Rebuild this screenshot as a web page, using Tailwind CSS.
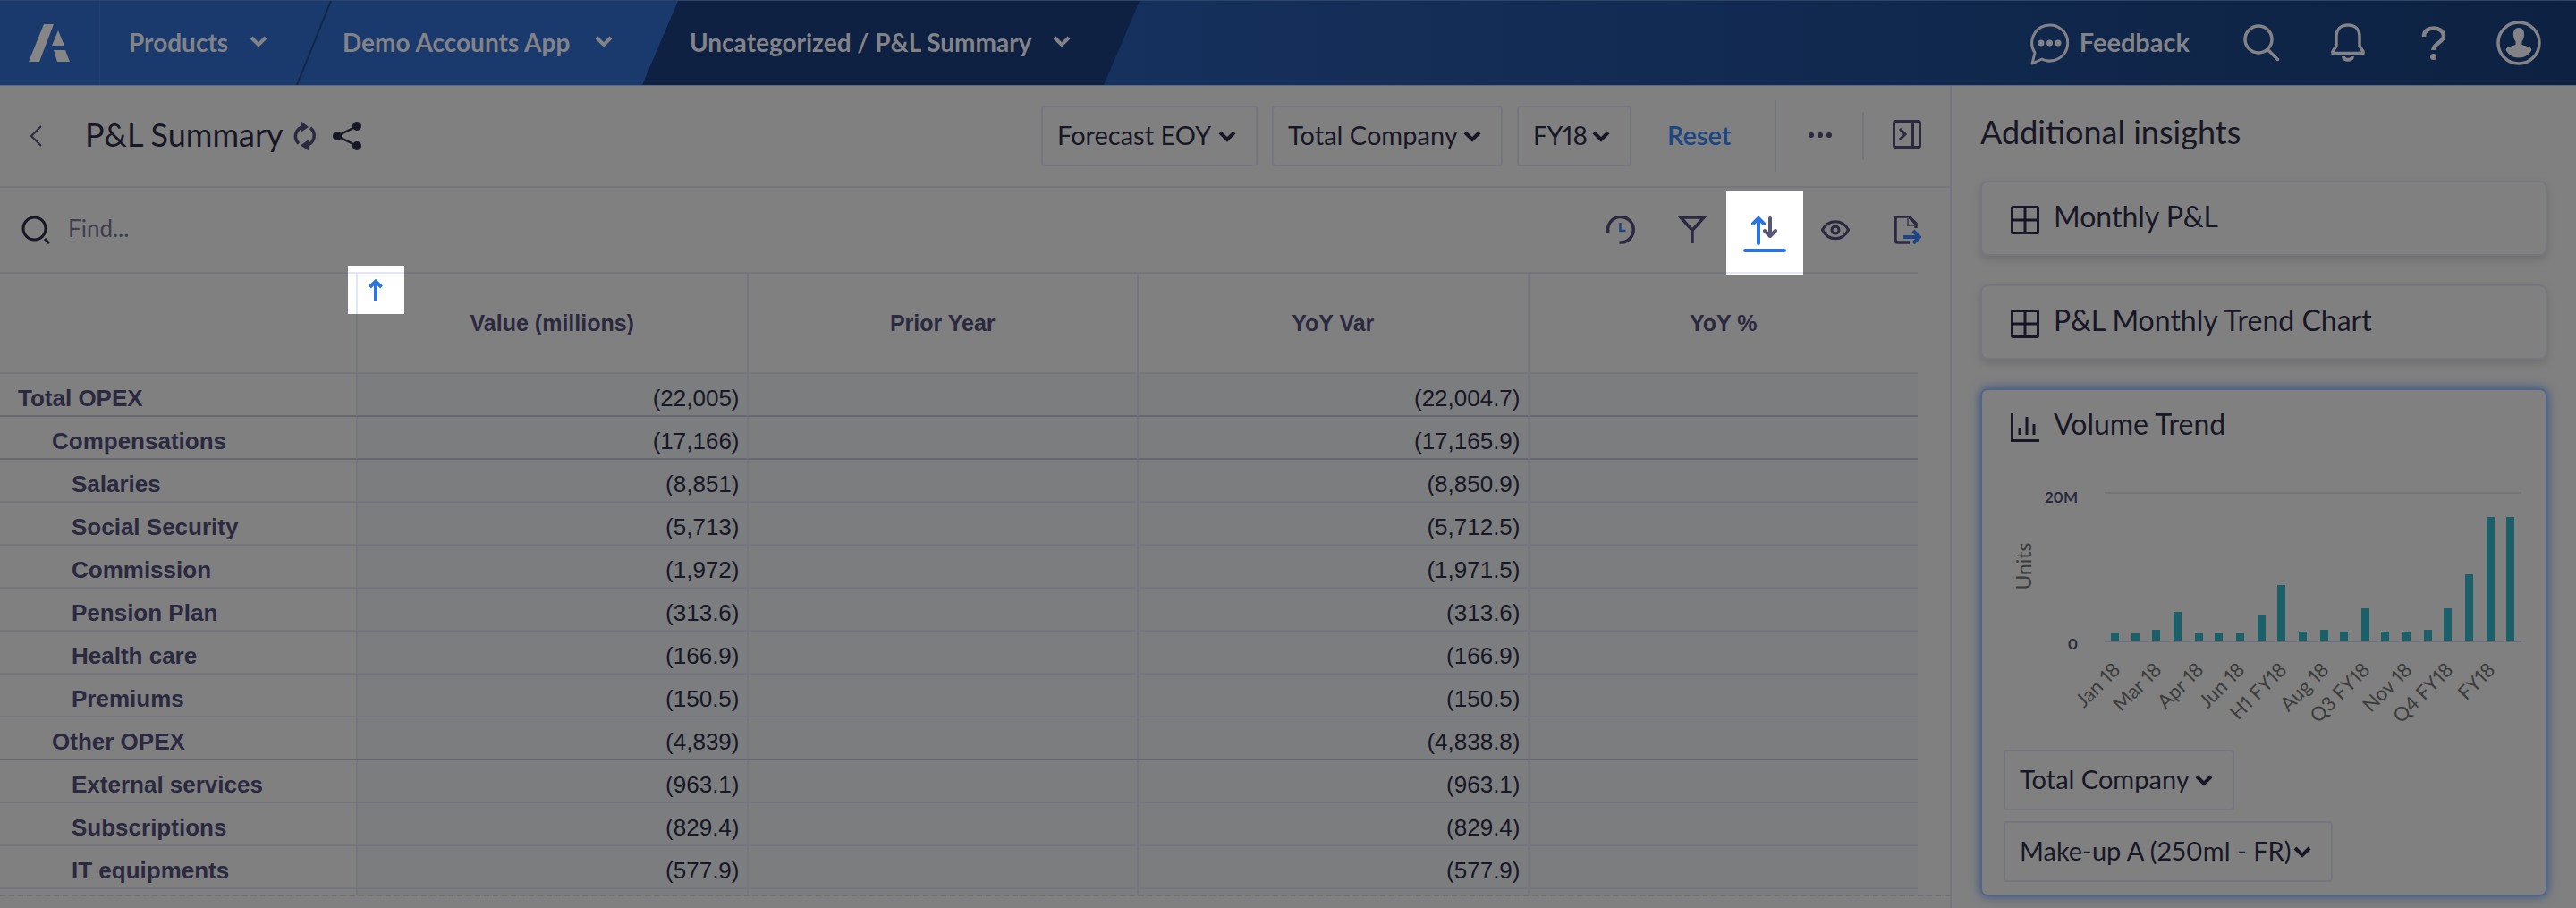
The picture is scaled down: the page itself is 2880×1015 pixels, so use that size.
<!DOCTYPE html>
<html lang="en">
<head>
<meta charset="utf-8">
<meta name="viewport" content="width=device-width, initial-scale=1">
<title>P&amp;L Summary</title>
<script src="https://cdn.jsdelivr.net/npm/@tailwindcss/browser@4"></script>
</head>
<body class="flex min-h-screen flex-col bg-[#808080] font-['Lato',sans-serif] text-[#171726] proportional-nums">

<!-- Top navigation -->
<header class="flex h-24 items-stretch border-t border-b border-t-[#2f4568] border-b-[#5d6a82] bg-linear-to-r from-[#1a3a6e] from-26% via-[#15305c] via-45% to-[#0d2242] to-100% text-[28px] font-bold text-[#838387]">
  <a href="#" aria-label="Home" class="flex w-28 items-center border-r border-[#21406f] pl-8">
    <svg class="h-[42px] w-12" viewBox="0 0 48 42" fill="#868686"><path d="M17 0h11L12 42H0z"/><path d="M33 7l7 17H26z"/><path d="M28 29h13l5 13H32z"/></svg>
  </a>
  <nav aria-label="Breadcrumb" class="flex items-stretch">
    <button class="flex w-[239px] items-center gap-6 pb-0.5 pl-8">Products
      <svg class="h-4 w-5" viewBox="0 0 20 16" fill="none" stroke="currentColor" stroke-width="4"><path d="M2 3l8 8 8-8"/></svg>
    </button>
    <svg class="-ml-5 h-full w-10" viewBox="0 0 40 94" preserveAspectRatio="none" fill="none" stroke="#0f2748" stroke-width="2"><path d="M39 0L1 94"/></svg>
    <button class="flex w-[347px] items-center gap-7 pb-0.5 pl-[12px]">Demo Accounts App
      <svg class="h-4 w-5" viewBox="0 0 20 16" fill="none" stroke="currentColor" stroke-width="4"><path d="M2 3l8 8 8-8"/></svg>
    </button>
    <button class="flex w-[556px] items-center gap-6 bg-[#0e2142] pb-0.5 pl-[53px] [clip-path:polygon(40px_0,100%_0,calc(100%-40px)_100%,0_100%)]">Uncategorized / P&amp;L Summary
      <svg class="h-4 w-5" viewBox="0 0 20 16" fill="none" stroke="currentColor" stroke-width="4"><path d="M2 3l8 8 8-8"/></svg>
    </button>
  </nav>
  <div class="ml-auto flex items-center pr-[39px]">
    <button class="mr-[59px] flex items-center gap-3 pb-0.5 text-[29px]">
      <svg class="mt-1.5 h-12 w-11" viewBox="0 0 44 48" fill="none" stroke="currentColor" stroke-width="3"><path d="M3 45l3-12A20 20 0 1 1 14 40z" stroke-linejoin="round"/><g fill="currentColor" stroke="none"><circle cx="13" cy="22" r="3.500"/><circle cx="22.500" cy="22" r="3.500"/><circle cx="32" cy="22" r="3.500"/></g></svg>
      Feedback
    </button>
    <button aria-label="Search" class="mr-14"><svg class="h-[42px] w-[42px]" viewBox="0 0 42 42" fill="none" stroke="currentColor" stroke-width="3.500" stroke-linecap="round"><circle cx="18" cy="17" r="15"/><path d="M28.500 28.500l11 11"/></svg></button>
    <button aria-label="Notifications" class="mr-[62px]"><svg class="h-11 w-10" viewBox="0 0 40 44" fill="none" stroke="currentColor" stroke-width="3.500"><path d="M3 33.500h34v-2l-4-6V15c0-8-5-13-13-13S7 7 7 15v10.500l-4 6z" stroke-linejoin="round"/><path d="M15 37c0 5 10 5 10 0" stroke-width="4"/></svg></button>
    <button aria-label="Help" class="mr-[56px]"><svg class="h-10 w-7" viewBox="0 0 28 40" fill="none" stroke="currentColor" stroke-width="4.500"><path d="M3 13C3 6 8 3.500 14 3.500S25 7 25 12c0 8-11.500 8-11.500 16"/><circle cx="13.500" cy="35.500" r="3.500" fill="currentColor" stroke="none"/></svg></button>
    <button aria-label="Account"><svg class="h-[50px] w-[50px]" viewBox="0 0 50 50" fill="none" stroke="currentColor" stroke-width="3.500"><circle cx="25" cy="25" r="23"/><path d="M25 8c-5 0-6.500 4-6 9 .3 3 1.500 5 2.500 6.500v3.500l-8 2.500c-2 .7-2.800 2-3 3.500 3 5 8 8.500 14.500 8.500S36.500 38 39.500 33c-.2-1.500-1-2.800-3-3.500L28.500 27v-3.500c1-1.500 2.200-3.500 2.500-6.500.5-5-1-9-6-9z" fill="currentColor" stroke="none"/></svg></button>
  </div>
</header>

<div class="flex grow items-stretch">
  <main class="flex min-w-0 grow flex-col">
    <!-- Page title and selectors -->
    <div class="flex h-[114px] items-center border-b-2 border-[#76767e] pl-[30px]">
      <a href="#" aria-label="Back" class="mr-[45px] text-[#2b2940]"><svg class="h-6 w-5" viewBox="0 0 20 24" fill="none" stroke="currentColor" stroke-width="2"><path d="M16 1L5 12l11 11"/></svg></a>
      <h1 class="pb-1 text-[36px]">P&amp;L Summary</h1>
      <button aria-label="Refresh" class="ml-2.5 text-[#2b2940]"><svg class="h-8 w-7" viewBox="0 0 28 32" fill="none" stroke="currentColor" stroke-width="3.500"><path d="M7 24.500A11 11 0 0 1 13 5.500"/><path d="M20 7a11 11 0 0 1-5 19.500"/><path d="M9 -1l9 7-9 6z" fill="currentColor" stroke="none"/><path d="M18 20l-9 6.500 9 6z" fill="currentColor" stroke="none"/></svg></button>
      <button aria-label="Share" class="ml-[17px]"><svg class="h-8 w-8" viewBox="0 0 32 32" fill="currentColor" stroke="currentColor"><path d="M27 5L5 16l22 11" fill="none" stroke-width="2.500"/><g stroke="none"><circle cx="5" cy="16" r="5"/><circle cx="27" cy="5" r="5"/><circle cx="27" cy="27" r="5"/></g></svg></button>
      <div class="ml-auto flex items-center gap-4 text-[29px]">
        <span class="relative"><select aria-label="Version" class="h-[68px] w-[242px] appearance-none rounded border-2 border-[#76767e] pb-0.5 pl-4"><option>Forecast EOY</option></select>
          <svg class="pointer-events-none absolute top-[27px] right-6 h-4 w-5" viewBox="0 0 20 16" fill="none" stroke="currentColor" stroke-width="4"><path d="M2 3l8 8 8-8"/></svg></span>
        <span class="relative"><select aria-label="Company" class="h-[68px] w-[258px] appearance-none rounded border-2 border-[#76767e] pb-0.5 pl-4"><option>Total Company</option></select>
          <svg class="pointer-events-none absolute top-[27px] right-6 h-4 w-5" viewBox="0 0 20 16" fill="none" stroke="currentColor" stroke-width="4"><path d="M2 3l8 8 8-8"/></svg></span>
        <span class="relative"><select aria-label="Year" class="h-[68px] w-32 appearance-none rounded border-2 border-[#76767e] pb-0.5 pl-4 text-[28px]"><option>FY18</option></select>
          <svg class="pointer-events-none absolute top-[27px] right-6 h-4 w-5" viewBox="0 0 20 16" fill="none" stroke="currentColor" stroke-width="4"><path d="M2 3l8 8 8-8"/></svg></span>
      </div>
      <button class="ml-10 w-[120px] pb-0.5 text-left text-[29px] font-semibold text-[#1b4584]">Reset</button>
      <span class="h-20 w-0.5 bg-[#76767e]"></span>
      <button aria-label="More" class="ml-9 text-[#2b2940]"><svg class="h-8 w-[26px]" viewBox="0 0 26 32" fill="currentColor"><circle cx="3" cy="15" r="3"/><circle cx="13" cy="15" r="3"/><circle cx="23" cy="15" r="3"/></svg></button>
      <span class="ml-[34px] h-[54px] w-0.5 bg-[#76767e]"></span>
      <button aria-label="Collapse panel" class="mr-[32px] ml-8 pb-1 text-[#2b2940]"><svg class="h-8 w-8" viewBox="0 0 32 32" fill="none" stroke="currentColor" stroke-width="3"><rect x="1.500" y="1.500" width="29" height="29" rx="2"/><path d="M22.500 2v28M8 10l6 6-6 6"/></svg></button>
    </div>

    <!-- Grid tools -->
    <div class="mr-9 flex h-24 items-center border-b-2 border-[#76767e] pl-6 text-[#2b2940]">
      <svg class="h-8 w-8 text-[#171726]" viewBox="0 0 32 32" fill="none" stroke="currentColor" stroke-width="3"><circle cx="14.500" cy="14.500" r="12.500"/><path d="M26 26l5 5"/></svg>
      <input type="search" aria-label="Find" placeholder="Find..." class="ml-5 w-80 bg-transparent pb-1 text-[26px] placeholder:text-[#3f3e4e]">
      <div class="ml-auto flex items-center">
        <button aria-label="History"><svg class="h-8 w-8" viewBox="0 0 32 32" fill="none" stroke="currentColor" stroke-width="3.500"><path d="M2 19A14.300 14.300 0 1 1 14.500 30"/><path d="M15.500 8v9h6" stroke="#1b4584" stroke-width="2.500"/></svg></button>
        <button aria-label="Filter" class="ml-12"><svg class="h-8 w-8" viewBox="0 0 32 32" fill="none" stroke="currentColor" stroke-width="3.500"><path d="M3 2h26L16 16.500zM16 15v16"/></svg></button>
        <!-- Sort stands out of the dimmed page -->
        <button aria-label="Sort" aria-pressed="true" class="relative z-10 mt-1.5 ml-[22px] flex h-[94px] w-[86px] flex-col items-center bg-white pt-[29px]"><svg class="h-8 w-8" viewBox="0 0 32 32" fill="none" stroke-width="4" stroke-linecap="round" stroke-linejoin="round"><path d="M9 30V3M3 8l6-6 6 6" stroke="#2c75dc"/><path d="M22 2v20M16 16l6 6 6-6" stroke="#575677"/></svg><span class="mt-1 h-1 w-12 rounded-full bg-[#2c75dc]"></span><span class="mt-[22px] h-0.5 w-full bg-[#e4e6f8]"></span></button>
        <button aria-label="Show and hide" class="ml-5"><svg class="h-8 w-8" viewBox="0 0 32 32" fill="none" stroke="currentColor" stroke-width="3"><path d="M1.500 16C8 3.500 24 3.500 30.500 16 24 29 8 29 1.500 16z"/><circle cx="16" cy="16" r="4"/></svg></button>
        <button aria-label="Export" class="-mr-1 ml-12"><svg class="h-8 w-8" viewBox="0 0 32 32" fill="none" stroke="currentColor" stroke-width="3"><path d="M19 30H6q-3 0-3-3V4q0-3 3-3h12l8 8v5" stroke-width="3.500"/><path d="M17 2v9h9" stroke-width="2" stroke="#4b4a5a"/><path d="M12 24h17M23 17l7 7-7 7" stroke="#1b4584" stroke-width="4"/></svg></button>
      </div>
    </div>

    <!-- Data grid -->
    <div class="border-b-2 border-dashed border-[#707074] pr-9 font-['Liberation_Sans',sans-serif] text-[26px] leading-[30px]">
      <table class="w-full table-fixed border-separate border-spacing-0">
        <colgroup><col class="w-[398px]"><col><col><col><col></colgroup>
        <thead class="text-[25px] text-[#2b2940] [&_th]:border-b-2 [&_th]:border-[#76767e] [&_th+th]:border-l-2">
          <tr class="h-28">
            <td class="border-b-2 border-[#76767e]"></td>
            <th scope="col" class="relative border-l-2">
              <button aria-label="Sorted ascending" class="absolute -top-[9px] -left-[11px] z-10 flex h-[54px] w-[63px] flex-col bg-white"><span class="mt-[7px] h-0.5 w-full bg-[#e4e6f8]"></span><span class="ml-[9px] flex w-10 grow items-start border-l-2 border-[#e4e6f8] pt-[6px] pl-3"><svg class="h-6 w-4" viewBox="0 0 16 24" fill="none" stroke="#2c75dc" stroke-width="4"><path d="M8 24V4M1.500 9L8 2.500 14.500 9"/></svg></span></button>
              Value (millions)</th>
            <th scope="col">Prior Year</th><th scope="col">YoY Var</th><th scope="col">YoY %</th>
          </tr>
        </thead>
        <tbody class="[&_td]:border-b-2 [&_td]:border-l-2 [&_td]:border-[#76767e] [&_td]:bg-[#7b7d7f] [&_td]:pt-2 [&_td]:pr-2 [&_td]:text-right [&_th]:border-b-2 [&_th]:border-[#76767e] [&_th]:pt-2 [&_th]:text-left [&_th]:text-[#2b2940] [&_tr]:h-12">
          <tr class="[&>*]:border-b-[#67676f]!"><th scope="row" class="pl-5">Total OPEX</th><td>(22,005)</td><td></td><td>(22,004.7)</td><td></td></tr>
          <tr class="[&>*]:border-b-[#67676f]!"><th scope="row" class="pl-[58px]">Compensations</th><td>(17,166)</td><td></td><td>(17,165.9)</td><td></td></tr>
          <tr><th scope="row" class="pl-20">Salaries</th><td>(8,851)</td><td></td><td>(8,850.9)</td><td></td></tr>
          <tr><th scope="row" class="pl-20">Social Security</th><td>(5,713)</td><td></td><td>(5,712.5)</td><td></td></tr>
          <tr><th scope="row" class="pl-20">Commission</th><td>(1,972)</td><td></td><td>(1,971.5)</td><td></td></tr>
          <tr><th scope="row" class="pl-20">Pension Plan</th><td>(313.6)</td><td></td><td>(313.6)</td><td></td></tr>
          <tr><th scope="row" class="pl-20">Health care</th><td>(166.9)</td><td></td><td>(166.9)</td><td></td></tr>
          <tr><th scope="row" class="pl-20">Premiums</th><td>(150.5)</td><td></td><td>(150.5)</td><td></td></tr>
          <tr class="[&>*]:border-b-[#67676f]!"><th scope="row" class="pl-[58px]">Other OPEX</th><td>(4,839)</td><td></td><td>(4,838.8)</td><td></td></tr>
          <tr><th scope="row" class="pl-20">External services</th><td>(963.1)</td><td></td><td>(963.1)</td><td></td></tr>
          <tr><th scope="row" class="pl-20">Subscriptions</th><td>(829.4)</td><td></td><td>(829.4)</td><td></td></tr>
          <tr><th scope="row" class="pl-20">IT equipments</th><td>(577.9)</td><td></td><td>(577.9)</td><td></td></tr>
        </tbody>
        <tfoot class="[&_td+td]:border-l-2 [&_td+td]:border-[#76767e] [&_td+td]:bg-[#7b7d7f]">
          <tr class="h-1.5"><td></td><td></td><td></td><td></td><td></td></tr>
        </tfoot>
      </table>
    </div>
  </main>

  <!-- Insights panel -->
  <aside class="flex w-[700px] shrink-0 flex-col border-l-2 border-[#76767e] pr-8 pl-8">
    <h2 class="flex h-[106px] items-center pb-1 text-[36px]">Additional insights</h2>
    <div class="flex flex-col gap-8 text-[32px]">
      <a href="#" class="flex h-[84px] items-center gap-4 rounded-lg border-2 border-[#76767e] pl-8 shadow-[0_4px_10px_rgba(0,0,0,0.15)]">
        <svg class="mt-1 h-8 w-8" viewBox="0 0 32 32" fill="none" stroke="currentColor" stroke-width="3"><rect x="1.500" y="1.500" width="29" height="29" rx="1"/><path d="M16 1v30M1 16h30"/></svg><span class="pb-1">Monthly P&amp;L</span></a>
      <a href="#" class="flex h-[84px] items-center gap-4 rounded-lg border-2 border-[#76767e] pl-8 shadow-[0_4px_10px_rgba(0,0,0,0.15)]">
        <svg class="mt-1 h-8 w-8" viewBox="0 0 32 32" fill="none" stroke="currentColor" stroke-width="3"><rect x="1.500" y="1.500" width="29" height="29" rx="1"/><path d="M16 1v30M1 16h30"/></svg><span class="pb-1">P&amp;L Monthly Trend Chart</span></a>
      <section class="rounded-lg border-2 border-[#52648a] pb-3.5 shadow-[0_0_12px_#34507f]">
        <h3 class="flex h-20 items-center gap-4 pl-8">
          <svg class="mt-1 h-8 w-8" viewBox="0 0 32 32" fill="none" stroke="currentColor" stroke-width="3"><path d="M1.500 0v30.500H32M10 16v8M18 4v20M26 12v12"/></svg><span class="pb-1">Volume Trend</span></h3>
        <svg class="h-[322px] w-full" viewBox="0 -4 630 322" font-family="Lato, sans-serif" role="img" aria-label="Units by period">
          <path d="M137 31h466" stroke="#747475" stroke-width="2"/>
          <path d="M137 197h466" stroke="#6a6f7c" stroke-width="2"/>
          <g font-size="17" font-weight="700" fill="#2b2940" text-anchor="end"><text x="107" y="42">20M</text><text x="107" y="206">0</text></g>
          <text transform="translate(55 113) rotate(-90)" text-anchor="middle" font-size="23" fill="#3c3c3c">Units</text>
          <g fill="#1b6068">
            <rect x="144" y="188" width="9" height="8"/><rect x="167" y="188" width="9" height="8"/><rect x="190" y="184" width="9" height="12"/><rect x="214" y="164" width="9" height="32"/><rect x="238" y="188" width="9" height="8"/>
            <rect x="260" y="188" width="9" height="8"/><rect x="284" y="188" width="9" height="8"/><rect x="308" y="168" width="9" height="28"/><rect x="330" y="134" width="9" height="62"/><rect x="354" y="186" width="9" height="10"/>
            <rect x="378" y="184" width="9" height="12"/><rect x="400" y="186" width="9" height="10"/><rect x="424" y="160" width="9" height="36"/><rect x="446" y="186" width="9" height="10"/><rect x="470" y="186" width="9" height="10"/>
            <rect x="494" y="184" width="9" height="12"/><rect x="516" y="160" width="9" height="36"/><rect x="540" y="122" width="9" height="74"/><rect x="564" y="58" width="9" height="138"/><rect x="586" y="58" width="9" height="138"/>
          </g>
          <g font-size="22" fill="#3c3c3c" text-anchor="end">
            <text transform="translate(156 230) rotate(-45)">Jan 18</text>
            <text transform="translate(202 230) rotate(-45)">Mar 18</text>
            <text transform="translate(249 230) rotate(-45)">Apr 18</text>
            <text transform="translate(295 230) rotate(-45)">Jun 18</text>
            <text transform="translate(342 230) rotate(-45)">H1 FY18</text>
            <text transform="translate(389 230) rotate(-45)">Aug 18</text>
            <text transform="translate(435 230) rotate(-45)">Q3 FY18</text>
            <text transform="translate(482 230) rotate(-45)">Nov 18</text>
            <text transform="translate(528 230) rotate(-45)">Q4 FY18</text>
            <text transform="translate(575 230) rotate(-45)">FY18</text>
          </g>
        </svg>
        <div class="flex flex-col items-start gap-3 pl-6 text-[29px]">
          <span class="relative flex"><select aria-label="Company" class="h-[68px] w-[258px] appearance-none rounded border-2 border-[#76767e] pb-0.5 pl-4"><option>Total Company</option></select>
            <svg class="pointer-events-none absolute top-[27px] right-6 h-4 w-5" viewBox="0 0 20 16" fill="none" stroke="currentColor" stroke-width="4"><path d="M2 3l8 8 8-8"/></svg></span>
          <span class="relative flex"><select aria-label="Product" class="h-[68px] w-[368px] appearance-none rounded border-2 border-[#76767e] pb-0.5 pl-4"><option>Make-up A (250ml - FR)</option></select>
            <svg class="pointer-events-none absolute top-[27px] right-6 h-4 w-5" viewBox="0 0 20 16" fill="none" stroke="currentColor" stroke-width="4"><path d="M2 3l8 8 8-8"/></svg></span>
        </div>
      </section>
    </div>
  </aside>
</div>
</body>
</html>
